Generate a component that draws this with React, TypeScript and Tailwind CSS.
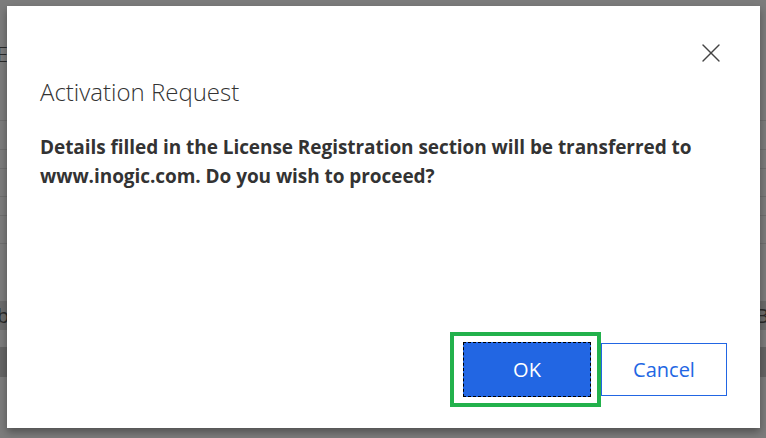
import { X } from "lucide-react";

const rows = [
  { h: "h-[121px]", text: "E" },
  { h: "h-[29px]", text: "" },
  { h: "h-[19px]", text: "" },
  { h: "h-[28px]", text: "" },
  { h: "h-[19px]", text: "" },
  { h: "h-[28px]", text: "" },
];

export default function App() {
  return (
    <div
      className="relative w-[766px] h-[438px] overflow-hidden bg-[#7c7c7c]"
      style={{ fontFamily: '"Open Sans", "Noto Sans", sans-serif' }}
    >
      {/* page behind the overlay */}
      <div className="flex flex-col">
        {rows.map((r, i) => (
          <div key={i} className={`${r.h} border-b border-[#6f6f6f] relative`}>
            {r.text && (
              <span className="absolute left-[-3px] top-[40px] text-[20px] font-light text-[#2a2a2a]">
                {r.text}
              </span>
            )}
          </div>
        ))}
        <div className="h-[57px]" />
        <div className="h-[29px] bg-[#6c6c6c] flex items-center justify-between text-[20px] text-[#2a2a2a]">
          <span className="-ml-[3px]">b</span>
          <span className="-mr-[3px]">B</span>
        </div>
        <div className="h-[17px]" />
        <div className="h-[30px] bg-[#656565]" />
      </div>

      {/* dialog */}
      <div className="absolute left-[7px] top-[6px] w-[753px] h-[422px] bg-white shadow-[0_4px_8px_rgba(0,0,0,0.35)] flex flex-col">
        <div className="flex justify-end pt-[31px] pr-[33px]">
          <button className="text-[#444]" aria-label="Close">
            <X size={32} strokeWidth={1} />
          </button>
        </div>
        <h2 className="mt-[11px] ml-[33px] text-[24px] font-light text-[#333] leading-none">
          Activation Request
        </h2>
        <p className="mt-[29px] ml-[33px] mr-[30px] text-[19px] font-bold leading-[29px] text-[#333] tracking-[-0.06px]">
          Details filled in the License Registration section will be transferred to www.inogic.com. Do you wish to proceed?
        </p>
        <div className="mt-auto mb-[21px] mr-[33px] flex justify-end items-center">
          <div className="border-[4px] border-[#22b14c] p-[6px_6px_6px_9px]">
            <button className="w-[128px] h-[55px] bg-[#2266e3] text-white text-[20px] outline outline-1 outline-dashed outline-black -outline-offset-1">
              OK
            </button>
          </div>
          <button className="w-[126px] h-[53px] border border-[#2266e3] text-[#2266e3] text-[20px] bg-white">
            Cancel
          </button>
        </div>
      </div>
    </div>
  );
}
